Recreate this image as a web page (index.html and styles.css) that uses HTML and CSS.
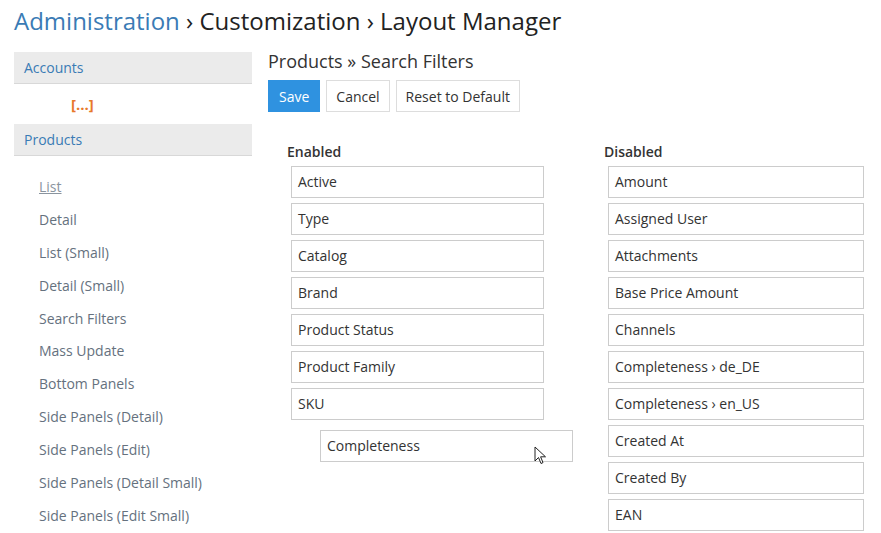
FILE: index.html
```html
<!DOCTYPE html>
<html>
<head>
<meta charset="utf-8">
<link rel="stylesheet" href="styles.css">
</head>
<body>
<div class="page">
  <h1 class="title"><a class="crumb-link">Administration</a> › Customization › Layout Manager</h1>
  <div class="layout">
    <aside class="sidebar">
      <div class="panel-head">Accounts</div>
      <div class="ellipsis">[...]</div>
      <div class="panel-head">Products</div>
      <ul class="links">
        <li><a class="active">List</a></li>
        <li><a>Detail</a></li>
        <li><a>List (Small)</a></li>
        <li><a>Detail (Small)</a></li>
        <li><a>Search Filters</a></li>
        <li><a>Mass Update</a></li>
        <li><a>Bottom Panels</a></li>
        <li><a>Side Panels (Detail)</a></li>
        <li><a>Side Panels (Edit)</a></li>
        <li><a>Side Panels (Detail Small)</a></li>
        <li><a>Side Panels (Edit Small)</a></li>
      </ul>
    </aside>
    <main class="main">
      <h2 class="subtitle">Products » Search Filters</h2>
      <div class="buttons">
        <button class="btn btn-primary">Save</button>
        <button class="btn">Cancel</button>
        <button class="btn">Reset to Default</button>
      </div>
      <div class="columns">
        <div class="col col-enabled">
          <div class="col-label">Enabled</div>
          <ul class="items">
            <li>Active</li>
            <li>Type</li>
            <li>Catalog</li>
            <li>Brand</li>
            <li>Product Status</li>
            <li>Product Family</li>
            <li>SKU</li>
          </ul>
          <div class="dragging">Completeness</div>
          <svg class="cursor" width="14" height="20" viewBox="0 0 14 20">
            <path d="M1 1 L1 15 L4.5 11.5 L7 17.5 L9 16.6 L6.6 10.8 L11.5 10.8 Z" fill="#fff" stroke="#222" stroke-width="1" stroke-linejoin="round"/>
          </svg>
        </div>
        <div class="col">
          <div class="col-label">Disabled</div>
          <ul class="items">
            <li>Amount</li>
            <li>Assigned User</li>
            <li>Attachments</li>
            <li>Base Price Amount</li>
            <li>Channels</li>
            <li>Completeness › de_DE</li>
            <li>Completeness › en_US</li>
            <li>Created At</li>
            <li>Created By</li>
            <li>EAN</li>
          </ul>
        </div>
      </div>
    </main>
  </div>
</div>
</body>
</html>
```

FILE: styles.css
```css
* { box-sizing: border-box; }
html, body { margin: 0; padding: 0; background: #fff; }
body {
  font-family: "Open Sans", "Liberation Sans", sans-serif;
  font-size: 14px;
  color: #333;
  overflow: hidden;
}
.page { padding: 6px 0 0 14px; }
.title {
  margin: 0;
  font-size: 24px;
  font-weight: 400;
  line-height: 30px;
  color: #222;
}
.crumb-link { color: #3a7bb5; text-decoration: none; }
.layout { display: flex; margin-top: 16px; }
.sidebar { width: 238px; flex: none; }
.panel-head {
  background: #ebebeb;
  border-bottom: 1px solid #d8d8d8;
  color: #3a7bb5;
  padding: 6px 10px 4px;
  line-height: 20px;
  height: 32px;
}
.ellipsis {
  color: #e8782a;
  font-weight: 700;
  font-size: 15px;
  padding: 9px 0 0 57px;
  height: 40px;
  line-height: 22px;
}
.links { list-style: none; margin: 0; padding: 21px 0 0 25px; }
.links li { height: 32.9px; line-height: 20px; }
.links a { color: #65717e; text-decoration: none; }
.links a.active { text-decoration: underline; color: #8a949e; }
.main { margin-left: 16px; flex: 1; position: relative; }
.subtitle {
  margin: -2px 0 0;
  font-size: 18px;
  font-weight: 400;
  line-height: 22px;
  color: #333;
}
.buttons { display: flex; gap: 6px; margin-top: 8px; }
.btn {
  font-family: inherit;
  font-size: 14px;
  height: 32px;
  padding: 0 9px;
  background: #fff;
  border: 1px solid #ddd;
  color: #333;
}
.btn-primary { background: #2f92e0; border-color: #2f92e0; color: #fff; padding: 0 10px; }
.columns { display: flex; margin-top: 30px; margin-left: 19px; }
.col { width: 317px; flex: none; position: relative; }
.col-label { font-weight: 600; line-height: 20px; height: 20px; margin-top: 0; }
.items { list-style: none; margin: 4px 0 0 4px; padding: 0; }
.items li {
  width: 253px;
  height: 32px;
  border: 1px solid #ccc;
  padding: 0 6px;
  line-height: 30px;
  margin-bottom: 5px;
  background: #fff;
}
.col + .col .items li { width: 256px; }
.dragging {
  position: absolute;
  left: 33px;
  top: 288px;
  width: 253px;
  height: 32px;
  border: 1px solid #ccc;
  padding: 0 6px;
  line-height: 30px;
  background: #fff;
}
.cursor { position: absolute; left: 247px; top: 304px; }
```
